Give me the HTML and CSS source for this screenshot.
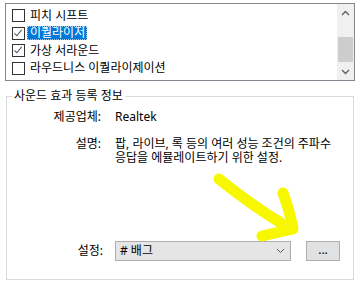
FILE: index.html
```html
<!DOCTYPE html>
<html lang="ko">
<head>
    <meta charset="UTF-8">
    <title>사운드 효과</title>
    <link rel="stylesheet" href="styles.css">
</head>
<body>
    <div class="page">
        <div class="listbox">
            <ul class="items">
                <li class="item"><span class="check"></span><span class="label">피치 시프트</span></li>
                <li class="item selected"><span class="check checked"></span><span class="label">이퀄라이저</span></li>
                <li class="item"><span class="check checked"></span><span class="label">가상 서라운드</span></li>
                <li class="item"><span class="check"></span><span class="label">라우드니스 이퀄라이제이션</span></li>
            </ul>
            <div class="scrollbar">
                <span class="arrow">
                    <svg width="9" height="6" viewBox="0 0 9 6"><path d="M1 5 L4.5 1.5 L8 5" fill="none" stroke="#606060" stroke-width="1.4"/></svg>
                </span>
                <span class="track"><span class="thumb"></span></span>
                <span class="arrow">
                    <svg width="9" height="6" viewBox="0 0 9 6"><path d="M1 1 L4.5 4.5 L8 1" fill="none" stroke="#606060" stroke-width="1.4"/></svg>
                </span>
            </div>
        </div>

        <fieldset class="group">
            <legend>사운드 효과 등록 정보</legend>
            <div class="props">
                <div class="prop">
                    <span class="key">제공업체:</span>
                    <span class="value">Realtek</span>
                </div>
                <div class="prop">
                    <span class="key">설명:</span>
                    <span class="value">팝, 라이브, 록 등의 여러 성능 조건의 주파수<br>응답을 에뮬레이트하기 위한 설정.</span>
                </div>
                <div class="prop setting">
                    <span class="key">설정:</span>
                    <div class="select">
                        <span># 배그</span>
                        <svg width="9" height="6" viewBox="0 0 9 6"><path d="M1 1 L4.5 4.5 L8 1" fill="none" stroke="#555" stroke-width="1"/></svg>
                    </div>
                    <button class="more">...</button>
                </div>
            </div>
        </fieldset>

        <svg class="marker" width="358" height="285" viewBox="0 0 358 285">
            <path d="M219 179 Q 250 204 281 223" />
            <path d="M283 193 Q 290 212 293 229 L 262 236" />
        </svg>
    </div>
</body>
</html>
```

FILE: styles.css
```css
body {
    margin: 0;
    background: #fff;
    font-family: "Noto Sans", "Noto Sans CJK KR", sans-serif;
    font-size: 12px;
    color: #000;
}
.page {
    position: relative;
    width: 358px;
    height: 285px;
    padding: 3px 3px 0 5px;
    box-sizing: border-box;
}
.listbox {
    display: flex;
    height: 78px;
    border: 1px solid #828790;
    box-sizing: border-box;
}
.items {
    flex: 1;
    list-style: none;
    margin: 0;
    padding: 3px 0 0 6px;
}
.item {
    display: flex;
    align-items: center;
    height: 17.5px;
}
.check {
    width: 13px;
    height: 13px;
    border: 1px solid #333;
    box-sizing: border-box;
    margin-right: 2px;
    position: relative;
}
.check.checked::after {
    content: "";
    position: absolute;
    left: 3px;
    top: 0px;
    width: 3px;
    height: 7px;
    border: solid #555;
    border-width: 0 1.2px 1.2px 0;
    transform: rotate(40deg);
}
.label {
    line-height: 14px;
    padding: 0 2px 0 3px;
}
.selected .label {
    background: #0078d7;
    color: #fff;
    outline: 1px dotted #9cc8ee;
    outline-offset: -1px;
}
.scrollbar {
    width: 17px;
    background: #f0f0f0;
    display: flex;
    flex-direction: column;
}
.arrow {
    height: 17px;
    display: flex;
    align-items: center;
    justify-content: center;
}
.track {
    flex: 1;
    padding-top: 16px;
}
.thumb {
    display: block;
    height: 25px;
    margin: 0 1px;
    background: #cdcdcd;
}
.group {
    margin: 8px 1px 0 1px;
    padding: 0;
    height: 191px;
    border: 1px solid #dcdcdc;
    box-sizing: border-box;
}
.group legend {
    margin-left: 5px;
    padding: 0 2px;
    line-height: 14px;
}
.props {
    display: flex;
    flex-direction: column;
    height: 175px;
    padding: 7px 0 17px;
    box-sizing: border-box;
}
.prop {
    display: flex;
    gap: 14px;
    line-height: 14px;
    margin-bottom: 13px;
}
.key {
    width: 94px;
    flex: none;
    text-align: right;
}
.setting {
    margin-top: auto;
    margin-bottom: 0;
    align-items: center;
}
.setting .key {
    width: 96px;
    margin-right: -2px;
}
.select {
    width: 176px;
    height: 20px;
    display: flex;
    align-items: center;
    justify-content: space-between;
    padding: 0 5px 0 4px;
    background: #e5e5e5;
    border: 1px solid #adadad;
    box-sizing: border-box;
}
.more {
    width: 34px;
    height: 20px;
    margin-left: 1px;
    padding: 0 0 3px;
    font: inherit;
    background: #e1e1e1;
    border: 1px solid #adadad;
    cursor: pointer;
}
.marker {
    position: absolute;
    left: 0;
    top: 0;
    pointer-events: none;
}
.marker path {
    fill: none;
    stroke: #f7f700;
    stroke-width: 11;
    stroke-linecap: round;
    stroke-linejoin: round;
}
```
